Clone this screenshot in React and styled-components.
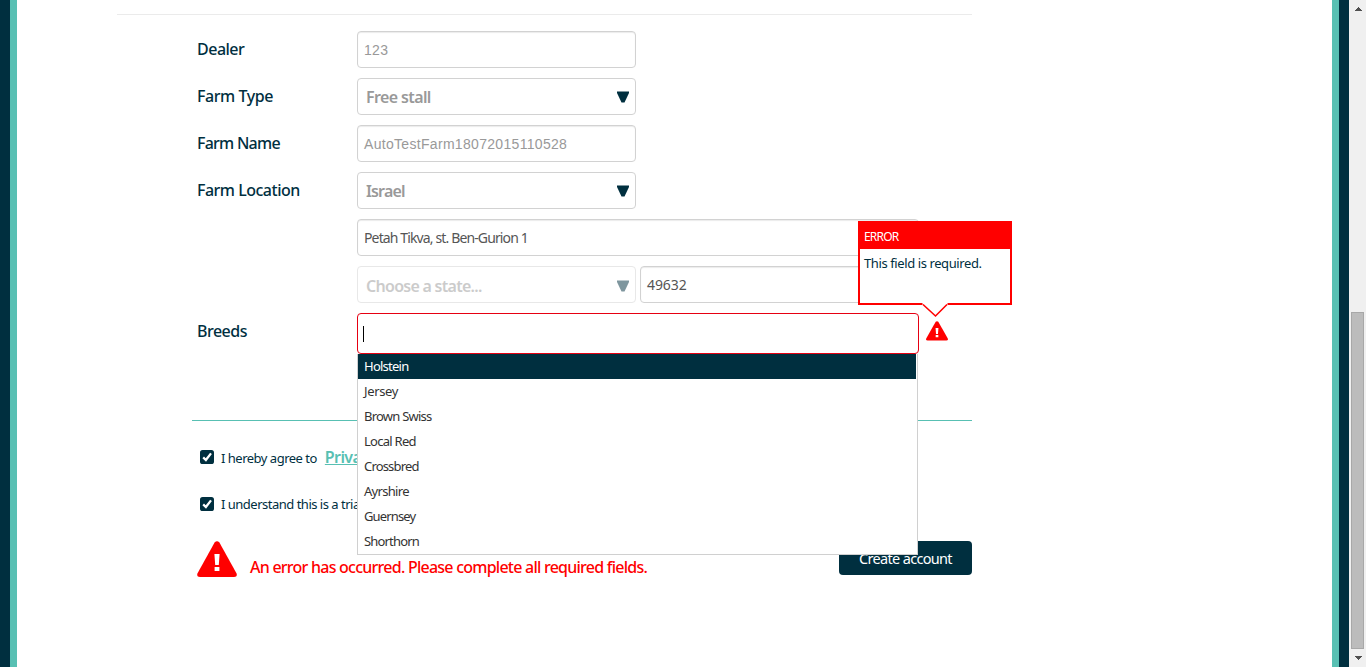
import React from "react";
import styled, { createGlobalStyle, css } from "styled-components";

const navy = "#002f3f";
const teal = "#58c0b3";
const red = "#ff0000";

const GlobalStyle = createGlobalStyle`
  * { box-sizing: border-box; }
  html, body { margin: 0; padding: 0; overflow: hidden; background: #fff; }
  body { font-family: "Noto Sans", "Open Sans", sans-serif; color: ${navy}; }
`;

const tracking = css`
  letter-spacing: ${(p) => p.$spacing || 0}px;
`;

const Page = styled.div`
  display: flex;
  height: 667px;
  width: 1366px;
  overflow: hidden;
`;

const Frame = styled.div`
  flex: 1;
  display: flex;
  border: solid ${navy};
  border-width: 0 10px;
`;

const Sheet = styled.main`
  flex: 1;
  border: solid ${teal};
  border-width: 0 7px;
  padding: 14px 0 0 100px;
`;

const Content = styled.div`
  width: 855px;
  border-top: 1px solid #ebebeb;
  padding: 16px 0 0 75px;
`;

const Form = styled.form`
  display: flex;
  flex-direction: column;
  gap: 10px;
  height: 390px;
  padding-left: 5px;
  border-bottom: 1px solid ${teal};
`;

const Row = styled.div`
  display: flex;
  align-items: flex-start;
  height: ${(p) => p.$height || 37}px;
`;

const Label = styled.label`
  width: 160px;
  flex: none;
  font-size: 16px;
  font-weight: 500;
  line-height: 36px;
  white-space: nowrap;
  ${tracking}
`;

const fieldBox = css`
  height: 37px;
  border: 1px solid #d2d2d2;
  border-radius: 4px;
  background: #fff;
  display: flex;
  align-items: center;
  white-space: nowrap;
`;

const Input = styled.div`
  ${fieldBox}
  width: ${(p) => p.$width || 279}px;
  padding: 0 6px;
  box-shadow: inset 0 1px 1px rgba(0, 0, 0, 0.08);
  color: #555;
  font-size: 14px;
  ${tracking}
  ${(p) =>
    p.$readOnly &&
    css`
      font-family: "Liberation Sans", Arial, sans-serif;
      color: #999;
    `}
`;

const Select = styled.div`
  ${fieldBox}
  width: 279px;
  justify-content: space-between;
  padding: ${(p) => (p.$disabled ? 3 : 1)}px 6px 0 8px;
  color: #999;
  font-size: 16px;
  font-weight: 600;
  ${tracking}
  opacity: ${(p) => (p.$disabled ? 0.5 : 1)};
`;

const Pair = styled.div`
  display: flex;
  gap: 4px;
`;

const BreedField = styled.div`
  position: relative;
  width: 562px;
  height: 41px;
  border: 1px solid #e60012;
  border-radius: 4px;
  padding: 12px 0 0 5px;
`;

const Caret = styled.div`
  width: 1px;
  height: 16px;
  background: #000;
`;

const Menu = styled.ul`
  position: absolute;
  z-index: 2;
  top: 40px;
  left: -1px;
  width: 561px;
  height: 201px;
  margin: 0;
  padding: 0 1px 0 0;
  list-style: none;
  background: #fff;
  border: solid #d0d0d0;
  border-width: 0 1px 1px;
`;

const Option = styled.li`
  height: 25px;
  line-height: 25px;
  padding-left: 6px;
  font-size: 13px;
  ${tracking}
  color: ${(p) => (p.$active ? "#fff" : "#333")};
  background: ${(p) => (p.$active ? navy : "transparent")};
`;

const FieldAlert = styled.div`
  position: relative;
  margin: 8px 0 0 7px;
  height: 20px;
`;

const Tooltip = styled.div`
  position: absolute;
  z-index: 3;
  left: -68px;
  top: -100px;
  width: 154px;
  height: 84px;
  border: 2px solid ${red};
  background: #fff;
`;

const TooltipTitle = styled.div`
  height: 26px;
  padding-left: 4px;
  line-height: 27px;
  font-size: 12px;
  color: #fff;
  background: ${red};
  ${tracking}
`;

const TooltipText = styled.div`
  padding: 5px 0 0 4px;
  line-height: 18px;
  font-size: 13px;
  white-space: nowrap;
  ${tracking}
`;

const TooltipTip = styled.svg`
  position: absolute;
  display: block;
  left: 62px;
  top: 79px;
`;

const Terms = styled.div`
  display: flex;
  flex-direction: column;
  gap: 27px;
  padding: 26px 0 0 8px;
`;

const Term = styled.div`
  display: flex;
  align-items: center;
  height: 20px;
  white-space: nowrap;
`;

const TermText = styled.span`
  margin: ${(p) => (p.$raised ? 0 : 2)}px 8px 0 6px;
  font-size: 13px;
  ${tracking}
`;

const TermLink = styled.a`
  font-size: 16px;
  font-weight: 600;
  color: ${teal};
  text-decoration: underline;
  ${tracking}
`;

const Footer = styled.div`
  display: flex;
  align-items: flex-start;
  padding: 27px 0 0 5px;
`;

const ErrorText = styled.p`
  margin: 15px 0 0 13px;
  flex: 1;
  font-size: 16px;
  line-height: 22px;
  font-weight: 500;
  color: ${red};
  white-space: nowrap;
  ${tracking}
`;

const Button = styled.button`
  width: 133px;
  height: 34px;
  padding: 0;
  border: 0;
  border-radius: 4px;
  background: ${navy};
  color: #fff;
  font: 400 14.5px/33px "Noto Sans", sans-serif;
  ${tracking}
`;

const Scrollbar = styled.div`
  width: 17px;
  background: #f0f0f0;
  display: flex;
  flex-direction: column;
  align-items: center;
  padding: 7px 0 7px 1px;
`;

const Thumb = styled.div`
  width: 13px;
  height: 337px;
  margin: auto 1px 7px 0;
  background: #bcbcbc;
  border: 1px solid #a8a8a8;
`;

const Block = styled.svg`
  display: block;
  flex: none;
`;

const Arrow = () => (
  <Block width="12" height="12" viewBox="0 0 12 12">
    <path d="M0 0.5H12V2L7.5 11.5H4.5L0 2Z" fill={navy} />
  </Block>
);

const Warning = ({ width, height }) => (
  <Block width={width} height={height} viewBox="0 0 40 36" preserveAspectRatio="none">
    <path d="M17.6 1.5Q20 -1 22.4 1.5L39.6 32.5Q40.5 36 37 36H3Q-0.5 36 0.4 32.5Z" fill={red} />
    <path d="M17.4 13H22.6L21.8 24H18.2ZM17.6 26H22.4V30H17.6Z" fill="#fff" />
  </Block>
);

const Check = () => (
  <Block width="15" height="15" viewBox="0 0 15 15">
    <rect x="0" y="0" width="14" height="14" rx="2.6" fill={navy} />
    <path d="M3.2 7.4L5.9 10L11 3.4" fill="none" stroke="#fff" strokeWidth="2.3" />
  </Block>
);

const breeds = [
  ["Holstein", -0.75],
  ["Jersey", -0.35],
  ["Brown Swiss", -0.77],
  ["Local Red", -0.72],
  ["Crossbred", -0.83],
  ["Ayrshire", -0.7],
  ["Guernsey", -0.85],
  ["Shorthorn", -0.83],
];

export default function App() {
  return (
    <Page>
      <GlobalStyle />
      <Frame>
        <Sheet>
          <Content>
            <Form>
              <Row>
                <Label $spacing={-0.5}>Dealer</Label>
                <Input $readOnly $spacing={0.31}>123</Input>
              </Row>
              <Row>
                <Label $spacing={-0.42}>Farm Type</Label>
                <Select $spacing={-0.62}><span>Free stall</span><Arrow /></Select>
              </Row>
              <Row>
                <Label $spacing={-0.75}>Farm Name</Label>
                <Input $readOnly $spacing={0.31}>AutoTestFarm18072015110528</Input>
              </Row>
              <Row>
                <Label $spacing={-0.5}>Farm Location</Label>
                <Select $spacing={-0.85}><span>Israel</span><Arrow /></Select>
              </Row>
              <Row>
                <Label />
                <Input $width={562} $spacing={-0.87}>Petah Tikva, st. Ben-Gurion 1</Input>
              </Row>
              <Row>
                <Label />
                <Pair>
                  <Select $disabled $spacing={-0.72}><span>Choose a state...</span><Arrow /></Select>
                  <Input $spacing={-0.1}>49632</Input>
                </Pair>
              </Row>
              <Row $height={41}>
                <Label $spacing={-0.5}>Breeds</Label>
                <BreedField>
                  <Caret />
                  <Menu>
                    {breeds.map(([name, spacing], i) => (
                      <Option key={name} $active={i === 0} $spacing={spacing}>{name}</Option>
                    ))}
                  </Menu>
                </BreedField>
                <FieldAlert>
                  <Warning width={22} height={19.5} />
                  <Tooltip>
                    <TooltipTitle $spacing={-0.8}>ERROR</TooltipTitle>
                    <TooltipText $spacing={-0.4}>This field is required.</TooltipText>
                    <TooltipTip width="26" height="16" viewBox="0 0 26 16">
                      <path d="M0.5 0H25.5V3L13 14L0.5 3Z" fill="#fff" />
                      <path d="M1 2.5L13.5 14L25 2.5" fill="none" stroke={red} strokeWidth="1.6" />
                    </TooltipTip>
                  </Tooltip>
                </FieldAlert>
              </Row>
            </Form>
            <Terms>
              <Term>
                <Check />
                <TermText $spacing={-0.5}>I hereby agree to</TermText>
                <TermLink $spacing={-0.6}>Privacy</TermLink>
              </Term>
              <Term>
                <Check />
                <TermText $raised $spacing={-0.5}>I understand this is a trial</TermText>
              </Term>
            </Terms>
            <Footer>
              <Warning width={40} height={36} />
              <ErrorText $spacing={-0.755}>An error has occurred. Please complete all required fields.</ErrorText>
              <Button type="button" $spacing={-0.68}>Create account</Button>
            </Footer>
          </Content>
        </Sheet>
      </Frame>
      <Scrollbar>
        <Block width="7" height="4" viewBox="0 0 7 4"><path d="M3 0H4V1H5V2H6V3H7V4H0V3H1V2H2V1H3Z" fill="#505050" /></Block>
        <Thumb />
        <Block width="7" height="4" viewBox="0 0 7 4"><path d="M0 0H7V1H6V2H5V3H4V4H3V3H2V2H1V1H0Z" fill="#505050" /></Block>
      </Scrollbar>
    </Page>
  );
}
